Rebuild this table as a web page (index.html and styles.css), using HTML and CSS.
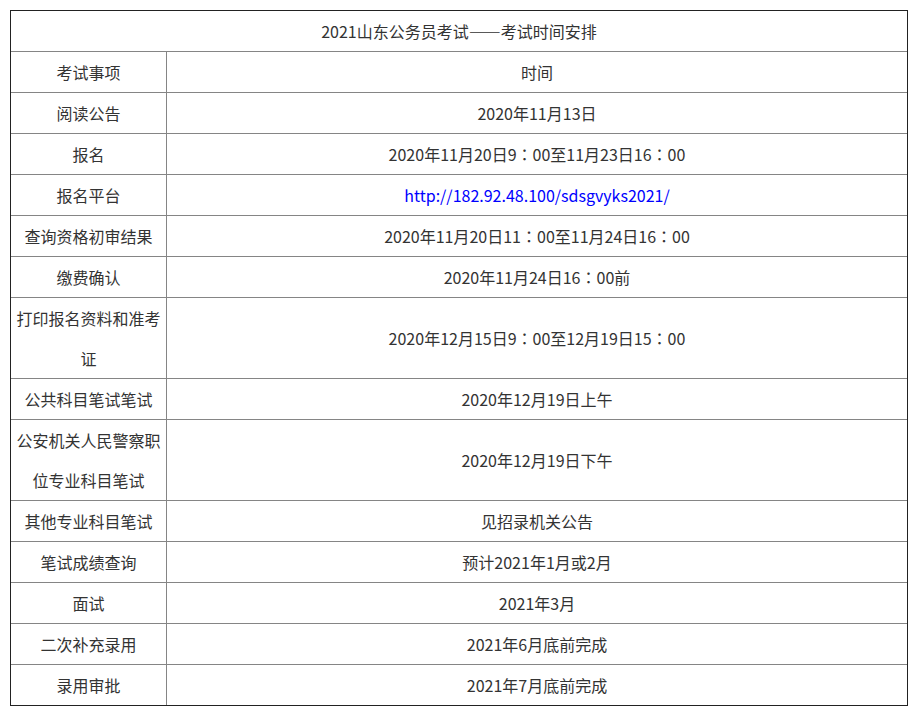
FILE: index.html
```html
<!DOCTYPE html>
<html lang="zh-CN">
<head>
<meta charset="utf-8">
<title>2021山东公务员考试——考试时间安排</title>
<link rel="stylesheet" href="styles.css">
</head>
<body>
<table class="schedule">
  <colgroup><col class="col-item"><col class="col-time"></colgroup>
  <tr><td class="title" colspan="2">2021山东公务员考试——考试时间安排</td></tr>
  <tr><td class="item">考试事项</td><td class="time">时间</td></tr>
  <tr><td class="item">阅读公告</td><td class="time">2020年11月13日</td></tr>
  <tr><td class="item">报名</td><td class="time">2020年11月20日9<span class="colon" lang="ja">：</span>00至11月23日16<span class="colon" lang="ja">：</span>00</td></tr>
  <tr><td class="item">报名平台</td><td class="time"><a class="link" href="#">http://182.92.48.100/sdsgvyks2021/</a></td></tr>
  <tr><td class="item">查询资格初审结果</td><td class="time">2020年11月20日11<span class="colon" lang="ja">：</span>00至11月24日16<span class="colon" lang="ja">：</span>00</td></tr>
  <tr><td class="item">缴费确认</td><td class="time">2020年11月24日16<span class="colon" lang="ja">：</span>00前</td></tr>
  <tr><td class="item">打印报名资料和准考证</td><td class="time">2020年12月15日9<span class="colon" lang="ja">：</span>00至12月19日15<span class="colon" lang="ja">：</span>00</td></tr>
  <tr><td class="item">公共科目笔试笔试</td><td class="time">2020年12月19日上午</td></tr>
  <tr><td class="item">公安机关人民警察职位专业科目笔试</td><td class="time">2020年12月19日下午</td></tr>
  <tr><td class="item">其他专业科目笔试</td><td class="time">见招录机关公告</td></tr>
  <tr><td class="item">笔试成绩查询</td><td class="time">预计2021年1月或2月</td></tr>
  <tr><td class="item">面试</td><td class="time">2021年3月</td></tr>
  <tr><td class="item">二次补充录用</td><td class="time">2021年6月底前完成</td></tr>
  <tr class="last"><td class="item">录用审批</td><td class="time">2021年7月底前完成</td></tr>
</table>
</body>
</html>
```
FILE: styles.css
```css
html, body {
  margin: 0;
  padding: 0;
  background: #fff;
}
body {
  font-family: "Microsoft YaHei", "Noto Sans CJK SC", "Noto Sans", sans-serif;
  font-size: 16px;
  color: #333;
}
.schedule {
  margin: 10px;
  width: 898px;
  border: 1px solid #222;
  border-collapse: separate;
  border-spacing: 0;
  table-layout: fixed;
}
.col-item {
  width: 156px;
}
.schedule td {
  text-align: center;
  vertical-align: middle;
  line-height: 40px;
  padding: 0 5px;
  border-bottom: 1px solid #858585;
}
.schedule .last td {
  border-bottom: none;
}
.schedule .item {
  border-right: 1px solid #858585;
}
.schedule .title {
  height: 40px;
}
.colon {
  font-family: "Noto Sans CJK JP", "Noto Sans CJK SC", sans-serif;
}
.link {
  color: #0000ff;
  text-decoration: none;
}
```
